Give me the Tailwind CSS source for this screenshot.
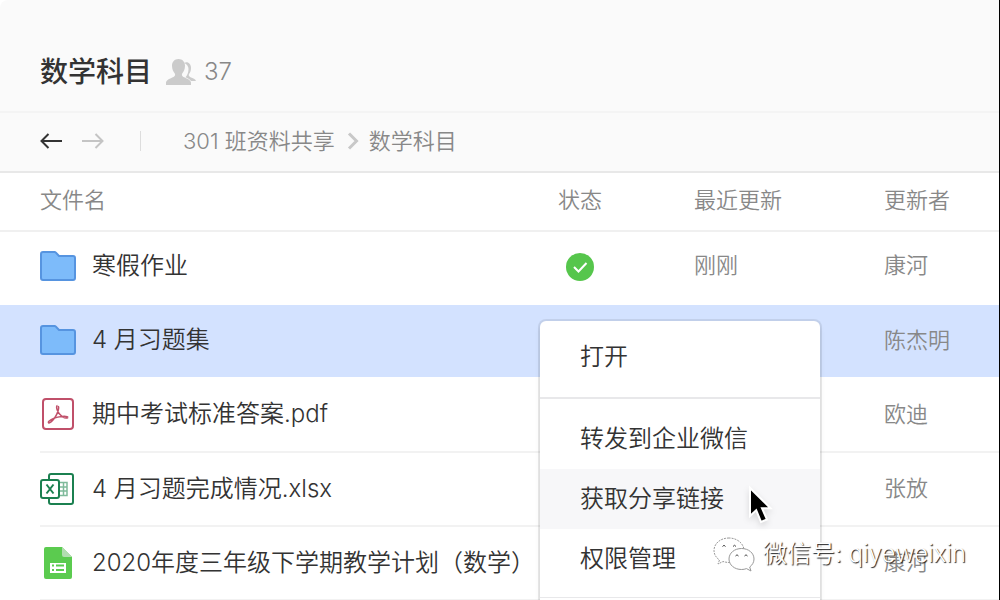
<!DOCTYPE html>
<html lang="zh-CN">

<head>
    <meta charset="UTF-8">
    <meta name="viewport" content="width=device-width, initial-scale=1.0">
    <title>数学科目</title>
    <script src="https://cdn.jsdelivr.net/npm/@tailwindcss/browser@4"></script>
</head>

<body class="h-screen overflow-hidden bg-white border-r border-black font-['Inter','Noto_Sans_CJK_SC',sans-serif] font-[350] text-[#333]">
    <!-- Shared shapes -->
    <svg class="hidden" aria-hidden="true">
        <symbol id="folder" viewBox="0 0 36 30">
            <path d="M1 3a2 2 0 0 1 2-2h11.500a2 2 0 0 1 1.400.6L19 5h14a2 2 0 0 1 2 2v20a2 2 0 0 1-2 2H3a2 2 0 0 1-2-2z" fill="#7dbbfa" stroke="#5694e0" stroke-width="2" />
        </symbol>
    </svg>

    <!-- Title -->
    <header class="h-[113px] pt-8 px-10 flex items-center gap-3.5 bg-[#fafafa] rounded-tl-lg border-b-2 border-[#f4f4f4]">
        <h1 class="text-[28px] leading-10 font-medium">数学科目</h1>
        <div class="flex items-center gap-2 text-2xl font-light text-[#888]">
            <svg class="w-[30px] h-7" viewBox="0 0 30 28" fill="#cbcbcb" aria-hidden="true">
                <path d="M18 5c4-2 7 1 7 5 0 3-1 5-2 6-.6 1.500 0 2.500 1.500 3.200 2.500 1.100 5 1.900 5.500 3.800h-5c-1.200-2-3.500-2.700-5.500-3.700 2-2.300 3-5 3-8.300 0-2.500-1.500-5-4.500-6z" />
                <path d="M12.500 1c4 0 6.500 2.800 6.500 6.800 0 3.700-1.300 6-2.800 7.700-.7 1.500-.2 2.700 1.300 3.500 3.500 1.700 7 2.700 7.500 5.500V27H0v-2.500c.5-2.800 4-3.800 7.500-5.500 1.500-.8 2-2 1.300-3.500C7.300 13.800 6 11.500 6 7.800 6 3.800 8.500 1 12.500 1z" />
            </svg>
            <span>37</span>
        </div>
    </header>

    <!-- Path -->
    <nav class="h-[60px] px-10 pb-0.5 flex items-center bg-[#fafafa] border-b-2 border-[#e8e8e8] text-[22px] text-[#888]">
        <button class="mr-5" aria-label="后退">
            <svg class="w-[22px] h-4" viewBox="0 0 22 16" fill="none" stroke="#333" stroke-width="2" aria-hidden="true">
                <path d="M22 8H1.500M8.500 1l-7 7 7 7" />
            </svg>
        </button>
        <button aria-label="前进">
            <svg class="w-[22px] h-4" viewBox="0 0 22 16" fill="none" stroke="#c4c4c4" stroke-width="2" aria-hidden="true">
                <path d="M0 8h20.500M13.500 1l7 7-7 7" />
            </svg>
        </button>
        <span class="w-px h-5 mx-9 bg-[#ddd]"></span>
        <a href="#" class="ml-1.5">301 班资料共享</a>
        <svg class="w-3 h-[18px] ml-3 mr-2.5" viewBox="0 0 12 18" fill="none" stroke="#c8c8c8" stroke-width="3" aria-hidden="true">
            <path d="M2 1.500L9.500 9 2 16.500" />
        </svg>
        <a href="#">数学科目</a>
    </nav>

    <!-- Files -->
    <table class="w-full table-fixed text-left text-[22px] text-[#888]">
        <colgroup>
            <col class="w-10">
            <col>
            <col class="w-[136px]">
            <col class="w-[190px]">
            <col class="w-[115px]">
        </colgroup>
        <thead>
            <tr class="h-[58px] border-b-2 border-[#f0f0f0]">
                <td></td>
                <th class="pb-0.5 font-[350]">文件名</th>
                <th class="pb-0.5 font-[350]">状态</th>
                <th class="pb-0.5 font-[350]">最近更新</th>
                <th class="pb-0.5 font-[350]">更新者</th>
            </tr>
        </thead>
        <tbody>
            <tr class="h-[74px]">
                <td></td>
                <td class="pb-1.5">
                    <div class="flex items-center gap-4 text-2xl text-[#333]">
                        <svg class="w-9 h-[30px]" aria-hidden="true"><use href="#folder" /></svg>
                        <span>寒假作业</span>
                    </div>
                </td>
                <td class="pb-1">
                    <svg class="w-7 h-7 ml-2" viewBox="0 0 28 28" role="img" aria-label="已同步">
                        <circle cx="14" cy="14" r="14" fill="#56c64c" />
                        <path d="M8 14l4.500 4.500L20.500 10" fill="none" stroke="#fff" stroke-width="2" />
                    </svg>
                </td>
                <td class="pb-1.5">刚刚</td>
                <td class="pb-1.5">康河</td>
            </tr>
            <tr class="h-[72px] bg-[#d3e2ff]">
                <td></td>
                <td class="pb-0.5">
                    <div class="flex items-center gap-4 text-2xl text-[#333]">
                        <svg class="w-9 h-[30px]" aria-hidden="true"><use href="#folder" /></svg>
                        <span>4 月习题集</span>
                    </div>
                </td>
                <td></td>
                <td></td>
                <td class="pb-0.5">陈杰明</td>
            </tr>
            <tr class="h-[75px]">
                <td></td>
                <td class="border-b-2 border-[#f2f2f2]">
                    <div class="flex items-center gap-4 text-2xl text-[#333]">
                        <svg class="w-9 h-8" viewBox="0 0 36 32" fill="none" stroke="#c0506a" aria-hidden="true">
                            <rect x="3" y="1" width="30" height="30" rx="3" stroke-width="2" />
                            <path d="M17.500 7.500c-1.300.2-1 2.500-.3 4.500.9 2.700 2.700 5.200 5.300 6.800 1.700 1 4.300 1.400 5.500.7M18.300 8c.9 2-.2 5.500-1.600 8.300C14.800 20 12 23.500 9.500 24.800c-1.200.4-1.500-.6-.6-1.500 2.300-2.200 7.600-4.300 13-4.800 3-.3 5.800 0 6.100 1" stroke-width="1.500" />
                        </svg>
                        <span>期中考试标准答案.pdf</span>
                    </div>
                </td>
                <td class="border-b-2 border-[#f2f2f2]"></td>
                <td class="border-b-2 border-[#f2f2f2]"></td>
                <td class="border-b-2 border-[#f2f2f2]">欧迪</td>
            </tr>
            <tr class="h-[74px]">
                <td></td>
                <td class="border-b-2 border-[#f2f2f2]">
                    <div class="flex items-center gap-4 text-2xl text-[#333]">
                        <svg class="w-9 h-8" viewBox="0 0 36 32" fill="none" stroke="#1b8050" stroke-width="2" aria-hidden="true">
                            <path d="M9 7V3a2 2 0 0 1 2-2h20a2 2 0 0 1 2 2v26a2 2 0 0 1-2 2H11a2 2 0 0 1-2-2v-4" />
                            <path d="M20 9.500h7v13h-7M20 14h7M20 18h7M23.500 9.500v13" stroke="#7fba9b" stroke-width="1.500" />
                            <rect x="1" y="7" width="18" height="18" rx="2" fill="#fff" />
                            <path d="M6.500 11.500l7 9M13.500 11.500l-7 9" />
                        </svg>
                        <span>4 月习题完成情况.xlsx</span>
                    </div>
                </td>
                <td class="border-b-2 border-[#f2f2f2]"></td>
                <td class="border-b-2 border-[#f2f2f2]"></td>
                <td class="pb-0.5 border-b-2 border-[#f2f2f2]">张放</td>
            </tr>
            <tr class="h-[73px]">
                <td></td>
                <td class="border-b border-[#f2f2f2]">
                    <div class="flex items-center gap-4 text-2xl text-[#333] whitespace-nowrap">
                        <svg class="w-9 h-8" viewBox="0 0 36 32" aria-hidden="true">
                            <path d="M6 0h16l10 10v20a2 2 0 0 1-2 2H6a2 2 0 0 1-2-2V2a2 2 0 0 1 2-2z" fill="#5bcb4f" />
                            <path d="M22 0l10 10H24a2 2 0 0 1-2-2z" fill="#b2ddb0" />
                            <path d="M10 16h16v10H10z" fill="#fff" />
                            <path d="M12 18.500h2M16 18.500h8M12 23h2M16 23h8" stroke="#5bcb4f" stroke-width="2" />
                        </svg>
                        <span>2020年度三年级下学期教学计划（数学）</span>
                    </div>
                </td>
                <td class="border-b border-[#f2f2f2]"></td>
                <td class="border-b border-[#f2f2f2]"></td>
                <td class="border-b border-[#f2f2f2]">康河</td>
            </tr>
        </tbody>
    </table>

    <!-- Context menu -->
    <div class="absolute top-[321px] right-[180px] bottom-0 w-[280px] bg-white rounded-t-md ring-2 ring-black/8 shadow-md text-2xl">
        <div class="pt-1.5 pb-2.5 border-b-2 border-[#e8e8ea]">
            <button class="block w-full h-[60px] px-10 text-left">打开</button>
        </div>
        <div class="pt-2.5 pb-2 border-b border-[#e8e8ea]">
            <button class="block w-full h-[60px] px-10 text-left">转发到企业微信</button>
            <button class="block w-full h-[60px] px-10 text-left bg-[#f7f7f9]">获取分享链接</button>
            <button class="block w-full h-[60px] px-10 text-left">权限管理</button>
        </div>
    </div>

    <!-- Pointer -->
    <svg class="absolute top-[485px] left-[746px] w-7 h-10 drop-shadow-md" viewBox="0 0 28 40" aria-hidden="true">
        <path d="M4 3v28l6.200-5.800L15 37l6-2.500-5-11.300h8.500z" fill="#000" stroke="#fff" stroke-width="2" />
    </svg>

    <!-- Account watermark -->
    <div class="absolute top-[536px] right-[34px] flex items-center gap-2 text-2xl leading-9 text-white">
        <svg class="w-[42px] h-9" viewBox="0 0 42 36" fill="#fff" stroke="#999" stroke-width="1" aria-hidden="true">
            <path d="M16 2C7.500 2 1 7.500 1 14.500c0 4 2.200 7.300 5.500 9.500L5 28l5-2.500c2 .6 4 1 6 1 8.500 0 15-5.500 15-12S24.500 2 16 2z" stroke-dasharray="2 1" />
            <path d="M28.500 12.500C21.500 12.500 16 17 16 23s5.500 10.500 12.500 10.500c1.800 0 3.500-.3 5-.9l4.500 2.400-1.300-4c2.700-2 4.300-4.800 4.300-8 0-6-5.500-10.500-12.500-10.500z" />
            <path d="M9.500 10.500q1.500-2.500 3 0M20 10.500q1.500-2.500 3 0M22.500 20q1.500-2.500 3 0M31.500 20q1.500-2.500 3 0" fill="none" stroke="#444" />
        </svg>
        <span class="[text-shadow:1px_1px_1px_#222]">微信号: qiyeweixin</span>
    </div>
</body>

</html>
